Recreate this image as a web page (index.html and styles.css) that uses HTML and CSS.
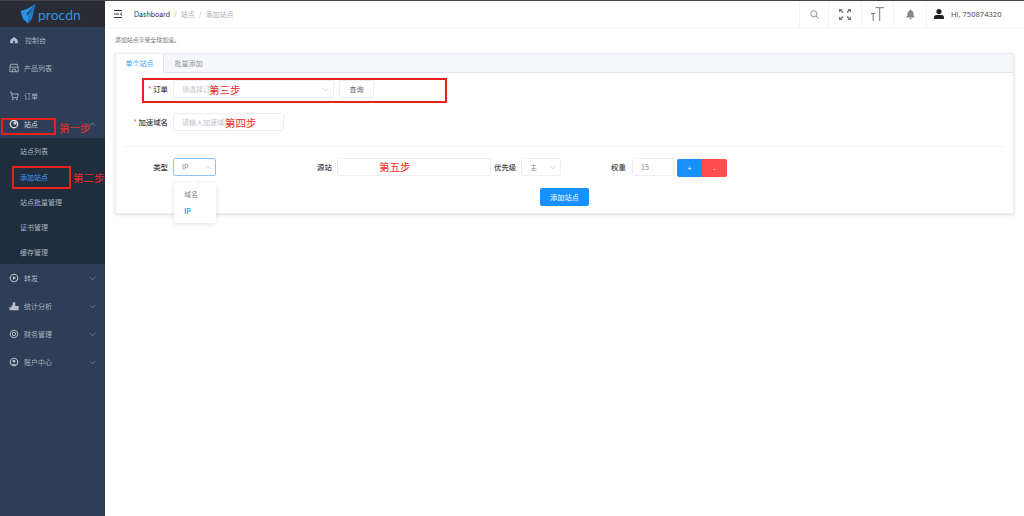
FILE: index.html
```html
<!DOCTYPE html>
<html lang="zh-CN">
<head>
  <meta charset="UTF-8" />
  <meta name="viewport" content="width=device-width, initial-scale=1.0" />
  <title>添加站点</title>
  <link rel="stylesheet" href="styles.css">
</head>
<body>
  <div class="app">
    <aside class="sidebar">
      <div class="logo">
        <svg class="logo-mark" width="16" height="20" viewBox="0 0 16 20">
          <path d="M15.5 0 L7 5 L0.5 7 L3 15 L8 19.5 L9 13 Z" fill="#2a93e6"/>
          <path d="M15.5 0 L12 15 L8 19.5 L9 13 Z" fill="#1f7cc6"/>
          <path d="M15.5 0 L6.5 9.5 L7.5 12.5 Z" fill="#174f80"/>
        </svg>
        <span class="logo-text">procdn</span>
      </div>
      <nav class="menu">
        <div class="menu-item">
          <svg class="menu-icon" viewBox="0 0 12 12"><path d="M1.5 6 L6 2.5 L10.5 6 V10 H1.5 Z" fill="#b4bdc9"/><rect x="5" y="7" width="2" height="3" fill="#2f3e55"/></svg>
          <span class="menu-first">控制台</span>
        </div>
        <div class="menu-item">
          <svg class="menu-icon" viewBox="0 0 12 12"><path d="M2 1.5 H10 L11 5 V10.5 H1 V5 Z M1 5 H11 M4 10.5 V7.5 H8 V10.5" fill="none" stroke="#b4bdc9" stroke-width="1"/></svg>
          <span>产品列表</span>
        </div>
        <div class="menu-item">
          <svg class="menu-icon" viewBox="0 0 12 12"><path d="M1 1.5 H3 L4 8 H10 L11 3.5 H3.4" fill="none" stroke="#b4bdc9" stroke-width="1"/><circle cx="4.5" cy="10" r="1" fill="#b4bdc9"/><circle cx="9.5" cy="10" r="1" fill="#b4bdc9"/></svg>
          <span>订单</span>
        </div>
        <div class="menu-item menu-open">
          <svg class="menu-icon" viewBox="0 0 12 12"><circle cx="6" cy="6" r="4.5" fill="none" stroke="#d5dae1" stroke-width="1.6"/><path d="M5.5 3 H9 V6.5 H5.5 Z" fill="#d5dae1"/></svg>
          <span>站点</span>
          <svg class="menu-arrow" viewBox="0 0 8 8"><path d="M1 5.5 L4 2.5 L7 5.5" fill="none" stroke="#8e9bad" stroke-width="0.8"/></svg>
        </div>
        <div class="submenu">
          <div class="submenu-item">站点列表</div>
          <div class="submenu-item submenu-active">添加站点</div>
          <div class="submenu-item">站点批量管理</div>
          <div class="submenu-item">证书管理</div>
          <div class="submenu-item">缓存管理</div>
        </div>
        <div class="menu-item">
          <svg class="menu-icon" viewBox="0 0 12 12"><circle cx="6" cy="6" r="4.5" fill="none" stroke="#b4bdc9" stroke-width="1.4"/><path d="M4.7 3.5 L8.5 6 L4.7 8.5 Z" fill="#b4bdc9"/></svg>
          <span>转发</span>
          <svg class="menu-arrow" viewBox="0 0 8 8"><path d="M1 2.5 L4 5.5 L7 2.5" fill="none" stroke="#8e9bad" stroke-width="0.8"/></svg>
        </div>
        <div class="menu-item">
          <svg class="menu-icon" viewBox="0 0 12 12"><path d="M0.5 11 V7.5 H3 V5 H4.5 V1.5 H7.5 V6 H11.5 V11 Z" fill="#b4bdc9"/></svg>
          <span>统计分析</span>
          <svg class="menu-arrow" viewBox="0 0 8 8"><path d="M1 2.5 L4 5.5 L7 2.5" fill="none" stroke="#8e9bad" stroke-width="0.8"/></svg>
        </div>
        <div class="menu-item">
          <svg class="menu-icon" viewBox="0 0 12 12"><circle cx="6" cy="6" r="4.5" fill="none" stroke="#b4bdc9" stroke-width="1.2"/><circle cx="6" cy="6" r="2" fill="none" stroke="#b4bdc9" stroke-width="1.2"/></svg>
          <span>财务管理</span>
          <svg class="menu-arrow" viewBox="0 0 8 8"><path d="M1 2.5 L4 5.5 L7 2.5" fill="none" stroke="#8e9bad" stroke-width="0.8"/></svg>
        </div>
        <div class="menu-item">
          <svg class="menu-icon" viewBox="0 0 12 12"><circle cx="6" cy="6" r="4.5" fill="none" stroke="#b4bdc9" stroke-width="1.4"/><circle cx="6" cy="5" r="1.7" fill="#b4bdc9"/><path d="M3.5 9.5 Q6 6.5 8.5 9.5" fill="#b4bdc9"/></svg>
          <span>账户中心</span>
          <svg class="menu-arrow" viewBox="0 0 8 8"><path d="M1 2.5 L4 5.5 L7 2.5" fill="none" stroke="#8e9bad" stroke-width="0.8"/></svg>
        </div>
      </nav>
    </aside>

    <div class="main">
      <header class="topbar">
        <div class="crumbs">
          <svg class="fold-icon" width="9" height="8" viewBox="0 0 9 8"><path d="M0 0.5 H8 M0 4 H5 M0 7.5 H8 M8 2.5 L6.3 4 L8 5.5" fill="none" stroke="#333" stroke-width="1"/></svg>
          <span class="crumb-root">Dashboard</span>
          <span class="crumb-sep">/</span>
          <span class="crumb">站点</span>
          <span class="crumb-sep">/</span>
          <span class="crumb">添加站点</span>
        </div>
        <div class="tools">
          <div class="tool tool-search">
            <svg width="9" height="9" viewBox="0 0 10 10"><circle cx="4.2" cy="4.2" r="3.4" fill="none" stroke="#888" stroke-width="1"/><path d="M6.6 6.6 L9.5 9.5" stroke="#888" stroke-width="1.1"/></svg>
          </div>
          <div class="tool tool-full">
            <svg width="14" height="13" viewBox="0 0 14 13"><path d="M1 1 H4.5 L3.5 2 L5.5 4 L4.5 5 L2.5 3 L1 4.5 Z M13 1 H9.5 L10.5 2 L8.5 4 L9.5 5 L11.5 3 L13 4.5 Z M1 12 H4.5 L3.5 11 L5.5 9 L4.5 8 L2.5 10 L1 8.5 Z M13 12 H9.5 L10.5 11 L8.5 9 L9.5 8 L11.5 10 L13 8.5 Z" fill="#777"/></svg>
          </div>
          <div class="tool tool-font">
            <svg width="13" height="14" viewBox="0 0 13 14"><path d="M0 6.5 H4.5 M2.2 6.5 V14 M4.5 0.7 H13 M8.7 0.7 V14" fill="none" stroke="#777" stroke-width="1"/></svg>
          </div>
          <div class="tool tool-bell">
            <svg width="9" height="11" viewBox="0 0 10 11"><path d="M5 0 Q6 0 6 1 Q8.5 2 8.5 5 V7 L10 8.7 H0 L1.5 7 V5 Q1.5 2 4 1 Q4 0 5 0 Z" fill="#888"/><circle cx="5" cy="10" r="1" fill="#888"/></svg>
          </div>
          <div class="tool tool-user">
            <svg width="10" height="10" viewBox="0 0 10 10"><circle cx="5" cy="2.6" r="2.6" fill="#222"/><path d="M0 10 V8 Q0 6 2.5 6 H7.5 Q10 6 10 8 V10 Z" fill="#222"/></svg>
            <span class="hi">Hi, 750874320</span>
          </div>
        </div>
      </header>

      <section class="content">
        <p class="intro">添加站点享受全球加速。</p>
        <div class="card">
          <div class="tabs">
            <div class="tab tab-active">单个站点</div>
            <div class="tab">批量添加</div>
          </div>
          <div class="card-body">
            <div class="form-row row-order">
              <label class="label"><i>*</i> 订单</label>
              <div class="field select select-order"><span class="placeholder">请选择订单</span><svg class="caret" viewBox="0 0 8 8"><path d="M1 2.5 L4 5.5 L7 2.5" fill="none" stroke="#c0c4cc" stroke-width="0.8"/></svg></div>
              <div class="field query-btn">查询</div>
            </div>
            <div class="form-row row-domain">
              <label class="label"><i>*</i> 加速域名</label>
              <div class="field input-domain"><span class="placeholder">请输入加速域名</span></div>
            </div>
            <div class="divider"></div>
            <div class="form-row row-origin">
              <label class="label">类型</label>
              <div class="field select select-type"><span>IP</span><svg class="caret" viewBox="0 0 8 8"><path d="M1 5.5 L4 2.5 L7 5.5" fill="none" stroke="#c0c4cc" stroke-width="0.8"/></svg></div>
              <label class="label-inline label-origin">源站</label>
              <div class="field input-origin"></div>
              <label class="label-inline label-priority">优先级</label>
              <div class="field select select-priority"><span>主</span><svg class="caret" viewBox="0 0 8 8"><path d="M1 2.5 L4 5.5 L7 2.5" fill="none" stroke="#c0c4cc" stroke-width="0.8"/></svg></div>
              <label class="label-inline label-weight">权重</label>
              <div class="field input-weight"><span>15</span></div>
              <div class="btn-pair">
                <div class="btn-add">+</div>
                <div class="btn-del">-</div>
              </div>
            </div>
            <div class="submit-row">
              <div class="submit-btn">添加站点</div>
            </div>
          </div>
        </div>
      </section>
    </div>
  </div>

  <div class="dropdown">
    <div class="dropdown-item">域名</div>
    <div class="dropdown-item dropdown-on">IP</div>
  </div>

  <!-- red notes drawn over the screenshot -->
  <div class="mark mark-order"></div>
  <div class="mark mark-site"></div>
  <div class="mark mark-add"></div>
  <span class="note note-1">第一步</span>
  <span class="note note-2">第二步</span>
  <span class="note note-3">第三步</span>
  <span class="note note-4">第四步</span>
  <span class="note note-5">第五步</span>
</body>
</html>
```

FILE: styles.css
```css
html, body {
  margin: 0;
  padding: 0;
  height: 100%;
  overflow: hidden;
  background-color: #fff;
  font-family: "Noto Sans CJK SC", "Noto Sans", sans-serif;
  font-size: 7px;
  color: #606266;
}

.app {
  display: flex;
  height: 516px;
  box-sizing: border-box;
  border-top: 1px solid #444;
}

/* sidebar */
.sidebar {
  width: 105px;
  flex-shrink: 0;
  background-color: #2e3e56;
  background-image: radial-gradient(#3a4a62 0.5px, transparent 0.6px);
  background-size: 8px 8px;
}

.logo {
  height: 26px;
  display: flex;
  align-items: center;
  padding-left: 20px;
  gap: 2px;
  background-color: #2a2c35;
}

.logo-mark {
  flex-shrink: 0;
}

.logo-text {
  font-family: "Lato", sans-serif;
  font-size: 14px;
  color: #2a93e6;
}

.menu-item {
  height: 28px;
  display: flex;
  align-items: center;
  padding-left: 9px;
  gap: 5px;
  color: #a9b3c0;
}

.menu-item:first-child {
  height: 26px;
  padding-bottom: 1px;
}

.menu-first {
  margin-left: 1px;
}

.menu-icon {
  width: 10px;
  height: 10px;
  flex-shrink: 0;
}

.menu-arrow {
  width: 7px;
  height: 7px;
  margin-left: auto;
  margin-right: 9px;
}

.menu-open {
  color: #d5dae1;
}

.submenu {
  background-color: #1f2d3d;
}

.submenu-item {
  height: 25px;
  display: flex;
  align-items: center;
  padding-left: 20px;
  color: #a9b3c0;
}

.submenu-item:first-child {
  height: 26px;
}

.submenu-active {
  color: #409eff;
}

/* top bar */
.main {
  flex: 1;
  display: flex;
  flex-direction: column;
}

.topbar {
  height: 26px;
  display: flex;
  align-items: center;
  justify-content: space-between;
  padding-left: 9px;
  padding-right: 7px;
  box-shadow: 0 1px 2px rgba(0, 0, 0, 0.05);
}

.crumbs {
  display: flex;
  align-items: center;
  gap: 4px;
}

.fold-icon {
  margin-right: 7px;
}

.crumb-root {
  font-family: "Inter", sans-serif;
  font-size: 7px;
  color: #303133;
}

.crumb, .crumb-sep {
  color: #a8adb5;
}

.tools {
  display: flex;
  align-items: stretch;
  height: 26px;
}

.tool {
  display: flex;
  align-items: center;
  justify-content: center;
  box-sizing: border-box;
  border-left: 1px solid #f3f4f6;
}

.tool-search {
  width: 29px;
}

.tool-full {
  width: 33px;
}

.tool-font {
  width: 32px;
}

.tool-bell {
  width: 33px;
}

.tool-user {
  width: 91px;
  gap: 7px;
  justify-content: flex-start;
  padding-left: 7px;
}

.hi {
  font-family: "Open Sans", sans-serif;
  font-size: 7.6px;
  color: #444;
}

/* content */
.content {
  padding: 0 10px;
}

.intro {
  margin: 0;
  height: 26px;
  line-height: 25px;
  font-size: 5.9px;
  color: #777;
}

.card {
  border: 1px solid #ebeef5;
  box-shadow: 0 1px 3px rgba(0, 0, 0, 0.14);
  height: 161px;
  box-sizing: border-box;
}

.tabs {
  display: flex;
  height: 19px;
  box-sizing: border-box;
  background-color: #f5f7fa;
  border-bottom: 1px solid #e4e7ed;
}

.tab {
  width: 49px;
  height: 19px;
  line-height: 19px;
  text-align: center;
  box-sizing: border-box;
  color: #909399;
}

.tab-active {
  width: 48px;
  color: #409eff;
  background-color: #fff;
  border-right: 1px solid #e4e7ed;
}

.card-body {
  padding-left: 57px;
  padding-top: 7px;
}

.form-row {
  display: flex;
  align-items: center;
  height: 18px;
}

.row-domain {
  margin-top: 15px;
}

.row-origin {
  margin-top: 11px;
}

.label {
  margin-left: -57px;
  padding-right: 5px;
  width: 52px;
  text-align: right;
  color: #444;
  font-size: 7.4px;
  line-height: 16px;
  margin-bottom: 1px;
  font-weight: 500;
  flex-shrink: 0;
}

.label i {
  color: #f56c6c;
  font-style: normal;
}

.label-inline {
  color: #444;
  font-size: 7.4px;
  line-height: 16px;
  margin-bottom: 1px;
  font-weight: 500;
  white-space: nowrap;
  flex-shrink: 0;
}

.field {
  box-sizing: border-box;
  height: 18px;
  border: 1px solid #ebeef5;
  border-radius: 2px;
  display: flex;
  align-items: center;
  background-color: #fff;
  color: #888;
  flex-shrink: 0;
}

.placeholder {
  color: #c0c4cc;
}

.select, .input-domain, .input-weight {
  padding-left: 8px;
  justify-content: space-between;
}

.caret {
  width: 7px;
  height: 7px;
  margin-right: 4px;
}

.select-order {
  width: 161px;
}

.query-btn {
  width: 35px;
  margin-left: 5px;
  justify-content: center;
  color: #606266;
}

.input-domain {
  width: 111px;
}

.divider {
  height: 1px;
  background-color: #f0f1f4;
  margin: 15px 9px 0 -48px;
}

.select-type {
  width: 43px;
  border-color: #8cc5ff;
}

.label-origin {
  width: 14px;
  margin-left: 101px;
}

.input-origin {
  width: 154px;
  margin-left: 6px;
}

.label-priority {
  width: 22px;
  margin-left: 3px;
}

.select-priority {
  width: 40px;
  margin-left: 5px;
}

.label-weight {
  width: 15px;
  margin-left: 50px;
}

.input-weight {
  width: 42px;
  margin-left: 6px;
}

.btn-pair {
  display: flex;
  align-self: flex-start;
  margin-left: 3px;
  margin-top: 1px;
  height: 18px;
  border-radius: 2px;
  overflow: hidden;
}

.btn-add, .btn-del {
  display: flex;
  align-items: center;
  justify-content: center;
  color: #fff;
}

.btn-add {
  width: 25px;
  background-color: #1890ff;
}

.btn-del {
  width: 25px;
  background-color: #ff4d4f;
}

.submit-row {
  margin-top: 12px;
  padding-left: 367px;
}

.submit-btn {
  width: 49px;
  height: 18px;
  line-height: 18px;
  text-align: center;
  border-radius: 2px;
  background-color: #1890ff;
  color: #fff;
  font-size: 7.2px;
}

/* open select list */
.dropdown {
  position: absolute;
  left: 174px;
  top: 183px;
  width: 42px;
  height: 40px;
  box-sizing: border-box;
  padding-top: 1px;
  background-color: #fff;
  border-radius: 2px;
  box-shadow: 0 1px 5px rgba(0, 0, 0, 0.13);
}

.dropdown::before {
  content: "";
  position: absolute;
  left: 17px;
  top: -2px;
  width: 4px;
  height: 4px;
  background-color: #fff;
  transform: rotate(45deg);
}

.dropdown-item {
  height: 17px;
  line-height: 20px;
  padding-left: 10px;
  color: #888;
}

.dropdown-on {
  color: #409eff;
  font-weight: 700;
}

/* annotations */
.mark {
  position: absolute;
  box-sizing: border-box;
  border: 2px solid #e8211c;
}

.mark-order {
  left: 142px;
  top: 78px;
  width: 305px;
  height: 25px;
}

.mark-site {
  left: 1px;
  top: 118px;
  width: 55px;
  height: 17px;
}

.mark-add {
  left: 12px;
  top: 166px;
  width: 59px;
  height: 23px;
}

.note {
  position: absolute;
  font-size: 10.5px;
  line-height: 14px;
  color: #f02c24;
}

.note-1 {
  left: 59px;
  top: 121px;
}

.note-2 {
  left: 73px;
  top: 171px;
}

.note-3 {
  left: 209px;
  top: 83px;
}

.note-4 {
  left: 225px;
  top: 116px;
}

.note-5 {
  left: 379px;
  top: 160px;
}
```
